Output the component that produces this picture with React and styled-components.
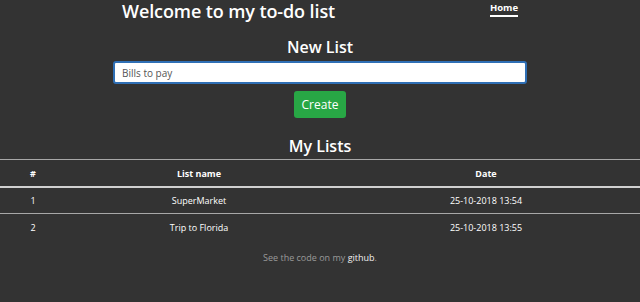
import React, { useState } from 'react';
import styled, { createGlobalStyle } from 'styled-components';

const GlobalStyle = createGlobalStyle`
  html, body {
    margin: 0;
    padding: 0;
    background: #333333;
  }
  body {
    font-family: 'Open Sans', 'Noto Sans', sans-serif;
    color: #ffffff;
  }
`;

const Page = styled.div`
  width: 640px;
  height: 302px;
  overflow: hidden;
`;

const Header = styled.header`
  box-sizing: border-box;
  width: 396px;
  margin: 0 auto;
  height: 22px;
  padding-top: 1px;
  display: flex;
  justify-content: space-between;
  align-items: flex-start;
`;

const Title = styled.h1`
  margin: 0;
  font-size: 18px;
  line-height: 20px;
  font-weight: 600;
  letter-spacing: -0.1px;
`;

const NavLink = styled.a`
  margin-top: 1px;
  font-size: 9.5px;
  font-weight: 700;
  line-height: 11px;
  color: #fff;
  padding-bottom: 2px;
  border-bottom: 2px solid #fff;
`;

const Section = styled.section`
  display: flex;
  flex-direction: column;
  align-items: center;
`;

const Heading = styled.h2`
  margin: ${(p) => p.$top}px 0 0;
  font-size: 16px;
  line-height: 22px;
  font-weight: 600;
`;

const Input = styled.input`
  box-sizing: border-box;
  width: 414px;
  height: 23px;
  margin-top: 3px;
  padding: 0 7px;
  border: 2px solid #2f6fb5;
  border-radius: 3px;
  font-family: inherit;
  font-size: 10px;
  color: #555;
  outline: none;
  background: #fff;
`;

const Button = styled.button`
  margin-top: 7px;
  width: 52px;
  height: 27px;
  border: none;
  border-radius: 3px;
  background: #28a745;
  color: #fff;
  font-family: inherit;
  font-size: 12px;
  cursor: pointer;
`;

const Table = styled.div`
  margin-top: 2px;
  width: 640px;
  font-size: 9px;
`;

const Row = styled.div`
  box-sizing: border-box;
  display: grid;
  grid-template-columns: 66px 266px 1fr;
  height: 27px;
  align-items: center;
  text-align: center;
  border-top: ${(p) => (p.$strong ? '2px solid #d0d0d0' : '1px solid #a8a8a8')};
  font-weight: ${(p) => (p.$head ? 700 : 400)};
`;

const Footer = styled.p`
  margin: 11px 0 0;
  text-align: center;
  font-size: 9px;
  color: #9a9a9a;
`;

const GitLink = styled.a`
  color: #f0f0f0;
  text-decoration: none;
`;

const lists = [
  { id: 1, name: 'SuperMarket', date: '25-10-2018 13:54' },
  { id: 2, name: 'Trip to Florida', date: '25-10-2018 13:55' },
];

const App = () => {
  const [name, setName] = useState('Bills to pay');

  return (
    <Page>
      <GlobalStyle />
      <Header>
        <Title>Welcome to my to-do list</Title>
        <NavLink>Home</NavLink>
      </Header>
      <Section>
        <Heading $top={14}>New List</Heading>
        <Input value={name} onChange={(e) => setName(e.target.value)} />
        <Button>Create</Button>
        <Heading $top={17}>My Lists</Heading>
      </Section>
      <Table>
        <Row $head>
          <span>#</span>
          <span>List name</span>
          <span>Date</span>
        </Row>
        {lists.map((list, i) => (
          <Row key={list.id} $strong={i === 0}>
            <span>{list.id}</span>
            <span>{list.name}</span>
            <span>{list.date}</span>
          </Row>
        ))}
      </Table>
      <Footer>
        See the code on my <GitLink>github</GitLink>.
      </Footer>
    </Page>
  );
};

export default App;
